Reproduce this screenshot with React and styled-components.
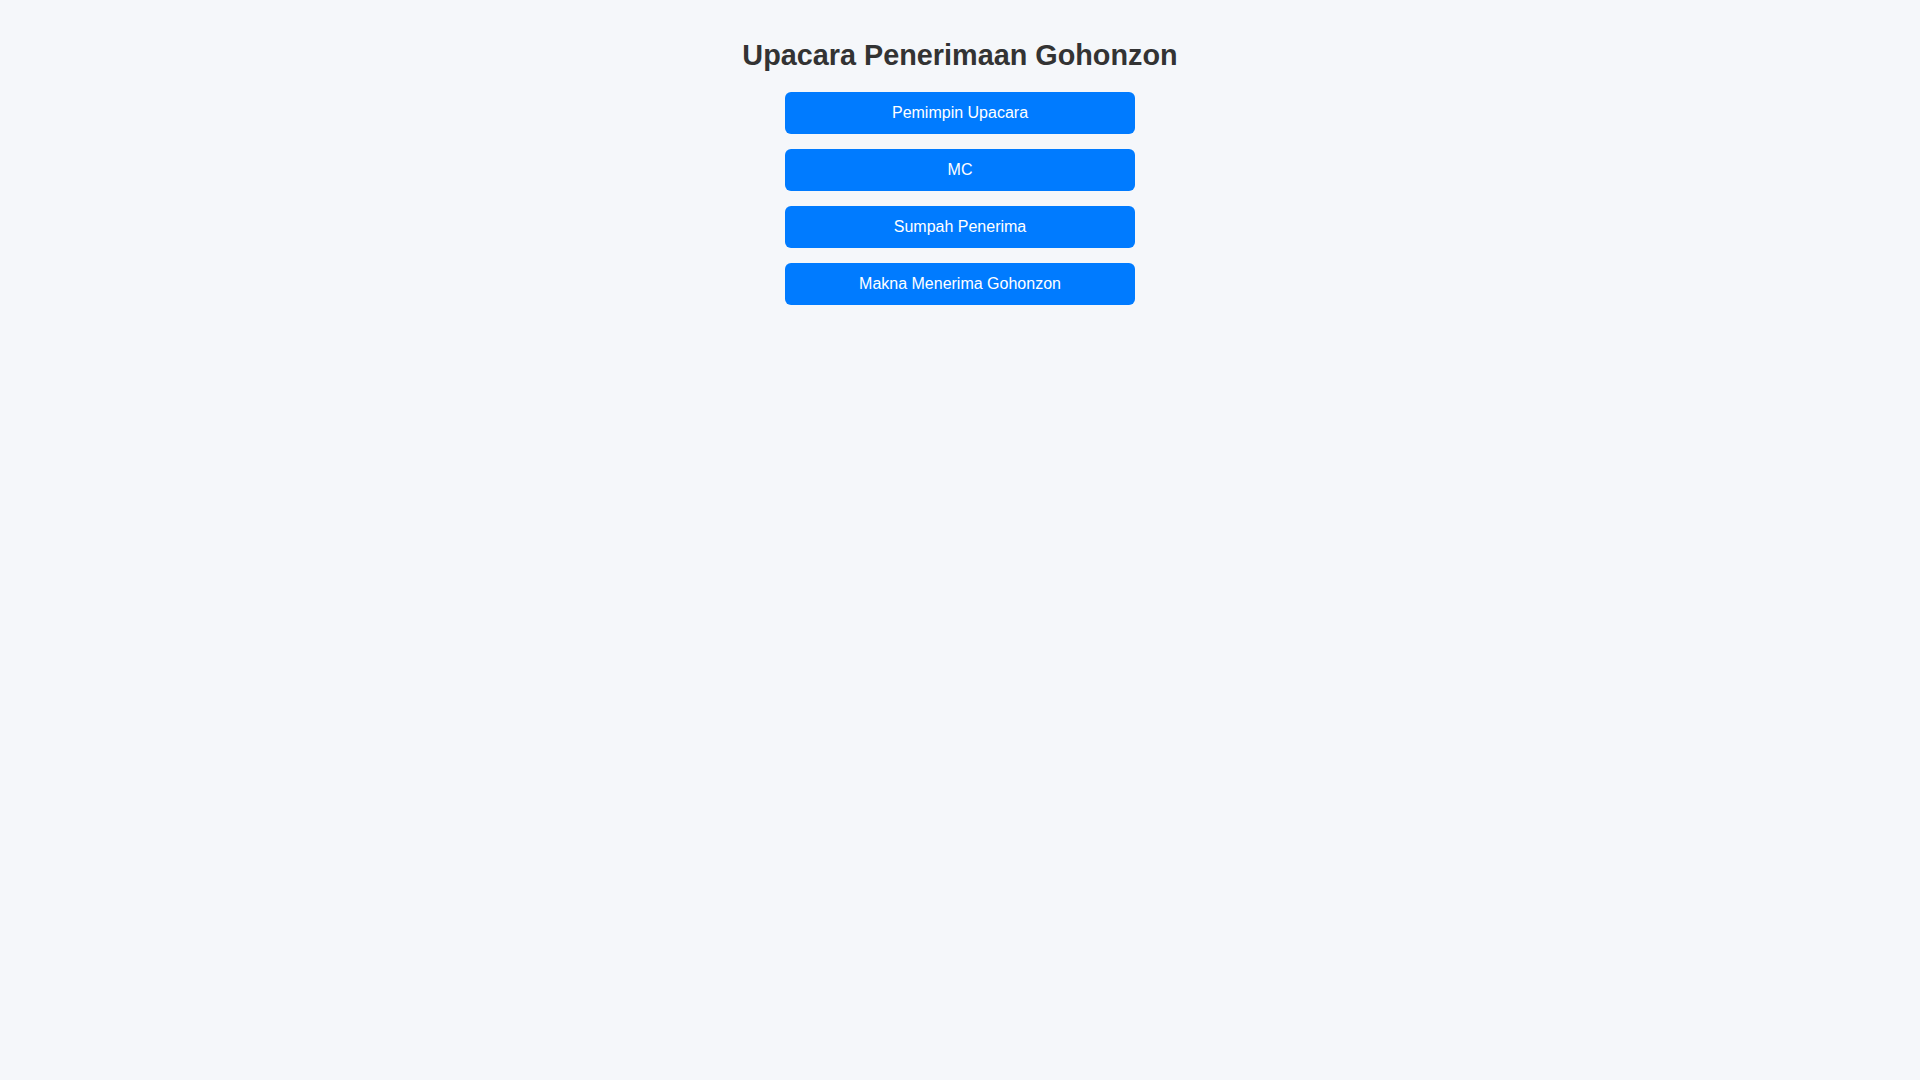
import React from "react";
import styled, { createGlobalStyle } from "styled-components";

const Global = createGlobalStyle`
  html, body { margin: 0; padding: 0; background: #f5f7fa; }
  body { font-family: "Liberation Sans", Arial, sans-serif; }
`;

const Page = styled.div`
  display: flex;
  flex-direction: column;
  align-items: center;
  padding-top: 39px;
`;

const Title = styled.h1`
  margin: 0 0 20px;
  font-size: 28.8px;
  font-weight: bold;
  color: #333333;
  line-height: 33px;
`;

const List = styled.div`
  display: flex;
  flex-direction: column;
  gap: 15px;
  width: 350px;
`;

const Button = styled.button`
  height: 42px;
  width: 100%;
  border: none;
  border-radius: 6px;
  background: #007bff;
  color: #ffffff;
  font-family: "Liberation Sans", Arial, sans-serif;
  font-size: 16px;
  cursor: pointer;
`;

const items = ["Pemimpin Upacara", "MC", "Sumpah Penerima", "Makna Menerima Gohonzon"];

export default function App() {
  return (
    <>
      <Global />
      <Page>
        <Title>Upacara Penerimaan Gohonzon</Title>
        <List>
          {items.map((t) => (
            <Button key={t}>{t}</Button>
          ))}
        </List>
      </Page>
    </>
  );
}
